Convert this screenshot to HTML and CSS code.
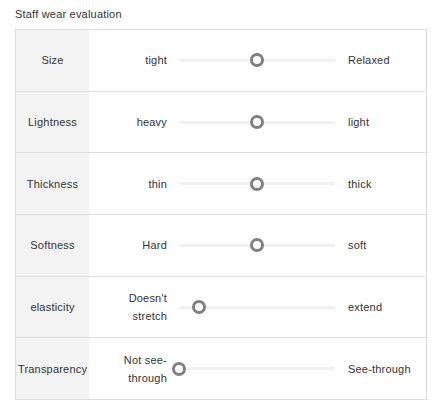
FILE: index.html
```html
<!DOCTYPE html>
<html>
<head>
<meta charset="utf-8">
<link rel="stylesheet" href="styles.css">
</head>
<body>
<div class="title">Staff wear evaluation</div>
<div class="table">
  <div class="row">
    <div class="label">Size</div>
    <div class="left">tight</div>
    <div class="track"><span class="thumb" style="left:50%"></span></div>
    <div class="right">Relaxed</div>
  </div>
  <div class="row">
    <div class="label">Lightness</div>
    <div class="left">heavy</div>
    <div class="track"><span class="thumb" style="left:50%"></span></div>
    <div class="right">light</div>
  </div>
  <div class="row">
    <div class="label">Thickness</div>
    <div class="left">thin</div>
    <div class="track"><span class="thumb" style="left:50%"></span></div>
    <div class="right">thick</div>
  </div>
  <div class="row">
    <div class="label">Softness</div>
    <div class="left">Hard</div>
    <div class="track"><span class="thumb" style="left:50%"></span></div>
    <div class="right">soft</div>
  </div>
  <div class="row">
    <div class="label">elasticity</div>
    <div class="left">Doesn't stretch</div>
    <div class="track"><span class="thumb" style="left:12.8%"></span></div>
    <div class="right">extend</div>
  </div>
  <div class="row">
    <div class="label">Transparency</div>
    <div class="left">Not see-through</div>
    <div class="track"><span class="thumb" style="left:0%"></span></div>
    <div class="right">See-through</div>
  </div>
</div>
</body>
</html>
```

FILE: styles.css
```css
html, body {
  margin: 0;
  padding: 0;
  background: #fff;
}
body {
  padding: 8px 15px;
  font-family: "Liberation Sans", Arial, sans-serif;
  font-size: 11px;
  letter-spacing: 0.2px;
  color: #333;
}
.title {
  height: 13px;
  line-height: 13px;
  margin-bottom: 8px;
}
.table {
  width: 410px;
  border: 1px solid #dcdcdc;
}
.row {
  display: grid;
  grid-template-columns: 73px 78px 12px 156px 13px 1fr;
  align-items: center;
  height: 60.7px;
  border-top: 1px solid #dcdcdc;
}
.row:first-child {
  border-top: none;
}
.label {
  grid-column: 1;
  align-self: stretch;
  display: flex;
  align-items: center;
  justify-content: center;
  background: #f3f3f3;
  text-align: center;
}
.left {
  grid-column: 2;
  text-align: right;
  padding-left: 26px;
  line-height: 18px;
}
.track {
  grid-column: 4;
  position: relative;
  height: 3px;
  background: #f0f0f0;
}
.thumb {
  position: absolute;
  top: 50%;
  width: 8px;
  height: 8px;
  border: 3px solid #808080;
  border-radius: 50%;
  background: #fff;
  transform: translate(-50%, -50%);
}
.right {
  grid-column: 6;
}
```
